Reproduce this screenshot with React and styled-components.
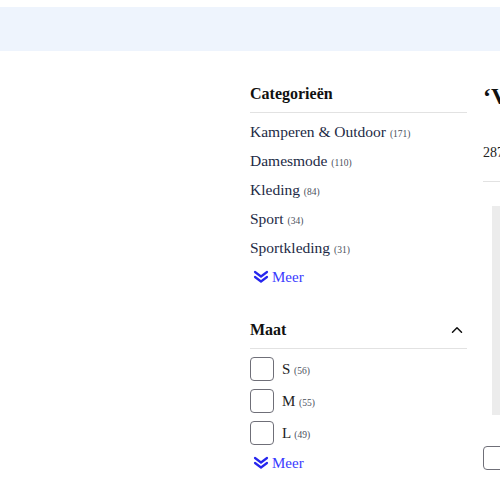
import styled, { createGlobalStyle } from "styled-components";
import { ChevronUp } from "lucide-react";

const GlobalStyle = createGlobalStyle`
  body {
    margin: 0;
    font-family: "Liberation Serif", "DejaVu Serif", serif;
    background: #fff;
    overflow: hidden;
  }
`;

const categories = [
  { name: "Kamperen & Outdoor", count: 171 },
  { name: "Damesmode", count: 110 },
  { name: "Kleding", count: 84 },
  { name: "Sport", count: 34 },
  { name: "Sportkleding", count: 31 },
];

const sizes = [
  { name: "S", count: 56 },
  { name: "M", count: 55 },
  { name: "L", count: 49 },
];

// double chevron, flatter than the lucide one
const DoubleDown = () => (
  <svg width="16" height="14" viewBox="0 0 16 14" fill="none">
    <path
      d="M2 2 L8 6.5 L14 2 M2 7 L8 11.5 L14 7"
      stroke="currentColor"
      strokeWidth="2.2"
      strokeLinecap="round"
      strokeLinejoin="round"
    />
  </svg>
);

const App = () => {
  return (
    <>
      <GlobalStyle />
      <Page>
        <TopBand />
        <Main>
          <Sidebar>
            <FilterBlock>
              <FilterHead>
                <h2>Categorieën</h2>
              </FilterHead>
              <CategoryList>
                {categories.map((c) => (
                  <CategoryItem key={c.name}>
                    {c.name} <Count>({c.count})</Count>
                  </CategoryItem>
                ))}
              </CategoryList>
              <MoreLink>
                <DoubleDown />
                Meer
              </MoreLink>
            </FilterBlock>

            <FilterBlock $spaced>
              <FilterHead>
                <h2>Maat</h2>
                <ChevronUp size={18} strokeWidth={2} />
              </FilterHead>
              <CheckList>
                {sizes.map((s) => (
                  <CheckRow key={s.name}>
                    <Box />
                    <span>
                      {s.name} <Count>({s.count})</Count>
                    </span>
                  </CheckRow>
                ))}
              </CheckList>
              <MoreLink>
                <DoubleDown />
                Meer
              </MoreLink>
            </FilterBlock>
          </Sidebar>

          <Content>
            <Title>‘V</Title>
            <ResultCount>287</ResultCount>
            <Rule />
            <Panel />
            <SortBox />
          </Content>
        </Main>
      </Page>
    </>
  );
};

const Page = styled.div`
  width: 500px;
  height: 500px;
  overflow: hidden;
`;

const TopBand = styled.div`
  margin-top: 7px;
  height: 44px;
  background: #eef4fd;
`;

const Main = styled.div`
  display: flex;
  gap: 16px;
  padding: 32px 0 0 250px;
`;

const Sidebar = styled.aside`
  width: 217px;
  flex-shrink: 0;
  display: flex;
  flex-direction: column;
`;

const FilterBlock = styled.section`
  display: flex;
  flex-direction: column;
  margin-top: ${(p) => (p.$spaced ? "31px" : "0")};
`;

const FilterHead = styled.div`
  display: flex;
  align-items: center;
  justify-content: space-between;
  height: 22px;
  padding-bottom: 7px;
  border-bottom: 1px solid #e2e2e2;
  color: #111;
  svg {
    margin-right: 1px;
  }
  h2 {
    margin: 0;
    font-size: 16px;
    font-weight: 700;
    color: #111;
  }
`;

const CategoryList = styled.ul`
  list-style: none;
  margin: 8px 0 0;
  padding: 0;
  display: flex;
  flex-direction: column;
`;

const CategoryItem = styled.li`
  height: 29px;
  line-height: 22px;
  font-size: 15.5px;
  color: #1d2a45;
`;

const Count = styled.span`
  font-size: 9.5px;
  color: #4a4f5c;
`;

const MoreLink = styled.a`
  display: flex;
  align-items: center;
  gap: 3px;
  height: 22px;
  margin-left: 3px;
  font-size: 15px;
  color: #3a3aff;
  cursor: pointer;
  svg {
    color: #2626ee;
  }
`;

const CheckList = styled.div`
  display: flex;
  flex-direction: column;
  gap: 8px;
  margin: 8px 0 7px;
`;

const CheckRow = styled.label`
  display: flex;
  align-items: center;
  gap: 8px;
  font-size: 15px;
  color: #222;
`;

const Box = styled.span`
  width: 22px;
  height: 22px;
  border: 1px solid #6f6f78;
  border-radius: 4px;
`;

const Content = styled.div`
  flex: 1;
  display: flex;
  flex-direction: column;
  min-width: 0;
`;

const Title = styled.h1`
  margin: 0;
  font-size: 24px;
  font-weight: 700;
  line-height: 26px;
  color: #111;
  white-space: nowrap;
`;

const ResultCount = styled.div`
  margin-top: 36px;
  font-size: 14px;
  color: #222;
`;

const Rule = styled.div`
  margin-top: 20px;
  border-top: 1px solid #e2e2e2;
`;

const Panel = styled.div`
  margin: 24px 0 0 9px;
  height: 209px;
  background: #ececec;
`;

const SortBox = styled.div`
  margin-top: 31px;
  height: 22px;
  width: 60px;
  border: 1px solid #6f6f78;
  border-radius: 4px;
`;

export default App;
